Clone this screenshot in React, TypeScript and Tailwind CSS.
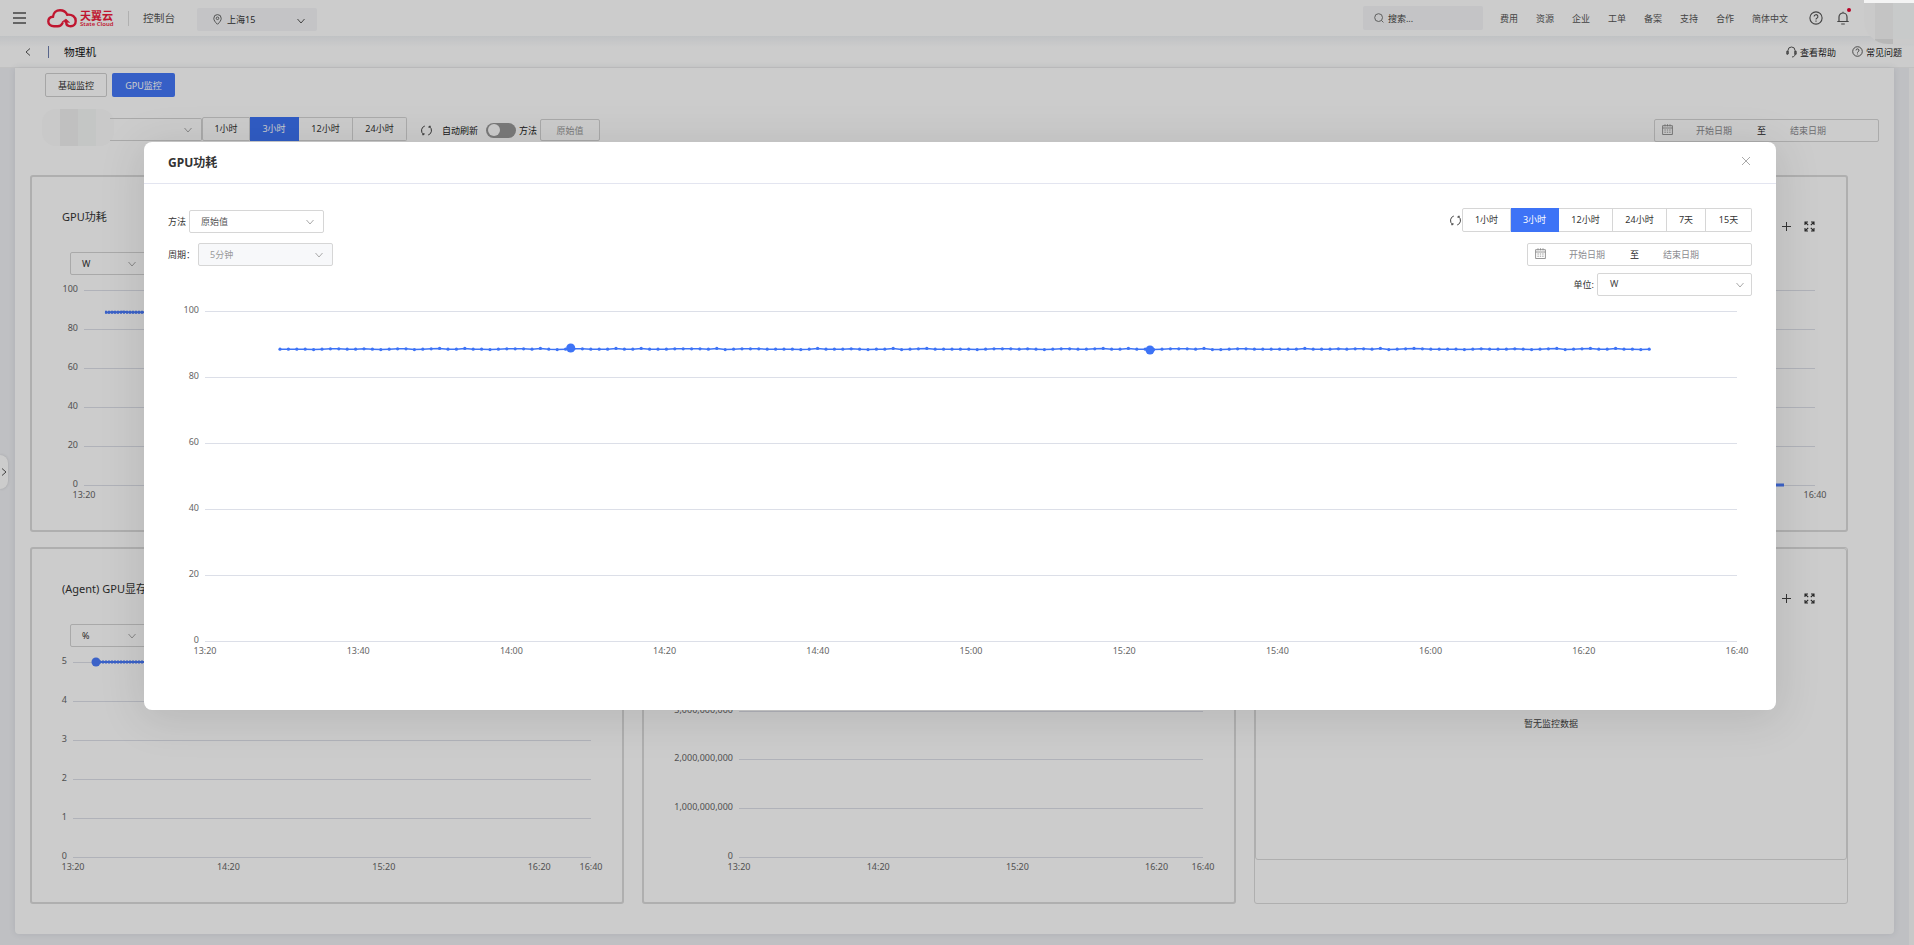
import React from "react";

type IconProps = { className?: string };

const Chevron = ({ className = "" }: IconProps) => (
  <svg viewBox="0 0 10 10" className={`h-[10px] w-[10px] shrink-0 ${className}`} fill="none" stroke="currentColor">
    <path d="M1.500 3 5 7 8.500 3" />
  </svg>
);

const Refresh = () => (
  <svg viewBox="0 0 11 11" className="h-[11px] w-[11px] shrink-0 text-[#444]" fill="none" stroke="currentColor" strokeWidth="1">
    <path d="M3.800 1A4.700 4.700 0 0 0 2.600 9.400M7.200 10A4.700 4.700 0 0 0 8.400 1.600" />
    <path d="M1.200 9.700h1.700V8M9.800 1.300H8.100V3" />
  </svg>
);

const Help = ({ className = "" }: IconProps) => (
  <svg viewBox="0 0 14 14" className={`shrink-0 ${className}`} fill="none" stroke="currentColor" strokeWidth="1.100">
    <circle cx="7" cy="7" r="6.100" />
    <path d="M5.100 5.600a1.900 1.900 0 1 1 2.700 1.700c-.6.3-.8.6-.8 1.200M7 9.600v1.100" />
  </svg>
);

const Calendar = () => (
  <svg viewBox="0 0 11 11" className="mb-[2px] h-[11px] w-[11px] shrink-0 text-[#8a8a8a]" fill="none" stroke="currentColor" strokeWidth=".9">
    <path d="M.6 1.700h9.800v8.800H.6zM.6 4h9.800M3 .3v2M5.500 .3v2M8 .3v2" />
    <path d="M2.400 6h6.400M2.400 8.200h6.400" strokeDasharray="1.400 1" />
  </svg>
);

const Expand = () => (
  <svg viewBox="0 0 11 11" className="h-[11px] w-[11px] text-[#333]" fill="none" stroke="currentColor" strokeWidth="1.100">
    <path d="M1 4V1h3M7 1h3v3M10 7v3H7M4 10H1V7M1 1l3.200 3.200M10 1 6.800 4.200M10 10 6.800 6.800M1 10l3.200-3.200" />
  </svg>
);

const Plus = () => (
  <svg viewBox="0 0 9 9" className="h-[9px] w-[9px] text-[#444]" stroke="currentColor">
    <path d="M4.500 0v9M0 4.500h9" />
  </svg>
);

const Logo = () => (
  <svg viewBox="0 0 30 19" className="h-[19px] w-[30px]" fill="none" stroke="#f01c3c" strokeWidth="2.400" strokeLinecap="round">
    <path d="M15.500 14.200c-1 2-2.600 3-4.600 3H7c-3.500 0-5.700-2-5.700-4.700 0-2.800 2-4.600 4.700-4.800C6.400 3.700 9.300 1.300 13 1.300c3.500 0 6 1.700 7.200 4.400 4.900-.5 8.500 2 8.500 6.200 0 3.300-2.300 5.300-5 5.300-2.600 0-4.500-1.500-4.500-4" />
    <path d="M15.200 12.700l3.800-2.700 3.400 3.200z" fill="#f01c3c" strokeWidth=".6" />
  </svg>
);

type Tick = [number, string];
type ChartProps = {
  viewBox: string;
  className: string;
  left: number;
  right: number;
  yTicks: Tick[];
  xTicks: Tick[];
  xLabelY: number;
  children?: React.ReactNode;
};

const Chart = ({ viewBox, className, left, right, yTicks, xTicks, xLabelY, children }: ChartProps) => (
  <svg viewBox={viewBox} className={`block shrink-0 ${className}`}>
    {yTicks.map(([y, label]) => (
      <g key={label}>
        <path d={`M${left} ${y + 0.5}H${right}`} stroke="#dcdfe8" />
        <text x={left - 6} y={y + 2.2} textAnchor="end" fontSize="9" fill="#666">
          {label}
        </text>
      </g>
    ))}
    {xTicks.map(([x, label]) => (
      <text key={label} x={x} y={xLabelY} textAnchor="middle" fontSize="9" fill="#666">
        {label}
      </text>
    ))}
    {children}
  </svg>
);

const percentTicks: Tick[] = [[115, "100"], [154, "80"], [193, "60"], [232, "40"], [271, "20"], [310, "0"]];

const hourTicks = (left: number): Tick[] => {
  const step = (561 - left) * 0.3;
  return [
    [left, "13:20"],
    [left + step, "14:20"],
    [left + 2 * step, "15:20"],
    [left + 3 * step, "16:20"],
    [561, "16:40"],
  ];
};

const CardChart = ({ left, yTicks, children }: { left: number; yTicks: Tick[]; children?: React.ReactNode }) => (
  <Chart viewBox="2 100 590 250" className="h-[250px] w-[590px]" left={left} right={561} yTicks={yTicks} xTicks={hourTicks(left)} xLabelY={322.5}>
    {children}
  </Chart>
);

const CardHead = ({ title }: { title: string }) => (
  <div className="flex h-[75px] shrink-0 justify-between pl-[30px] pr-[31px]">
    <div className="pt-[32px] text-[11px] leading-4 text-[#333]">{title}</div>
    <div className="flex items-center gap-[13px] pt-[24px]">
      <Plus />
      <Expand />
    </div>
  </div>
);

const Card = ({ title, unit, children }: { title: string; unit: string; children: React.ReactNode }) => (
  <section className="flex h-[357px] w-[594px] flex-col overflow-hidden rounded-[3px] border-2 border-[#dbdbdb]">
    <CardHead title={title} />
    <div className="ml-[38px] flex h-[23px] w-[76px] shrink-0 items-center justify-between rounded-[2px] border border-[#d4d4d4] pl-[11px] pr-2 text-[9px] text-[#333]">
      {unit}
      <Chevron className="text-[#aaa]" />
    </div>
    {children}
  </section>
);

const Segments = ({ items }: { items: [string, string][] }) => (
  <div className="flex h-6">
    {items.map(([label, width], i) => (
      <button
        key={label}
        className={`${width} border-y border-r pb-[2px] text-[9px] leading-none ${i === 0 ? "rounded-l-[2px] border-l" : ""} ${
          label === "3小时" ? "border-[#3d73f6] bg-[#3d73f6] text-white" : "border-[#d6d6d6] text-[#333]"
        } ${i === items.length - 1 ? "rounded-r-[2px]" : ""}`}
      >
        {label}
      </button>
    ))}
  </div>
);

const DateRange = () => (
  <div className="flex h-[23px] w-[225px] items-center rounded-[2px] border border-[#d6d6d6] pl-[7px] pb-px text-[9px] leading-none text-[#8b8b90]">
    <Calendar />
    <span className="ml-[23px] w-9">开始日期</span>
    <span className="ml-[25px] w-[9px] text-[#222]">至</span>
    <span className="ml-6">结束日期</span>
  </div>
);

const wobble = [0, 1, 0, -1, -2, 0, 0, 1, -1, 0, 0, -1, 0, -1, 0, 0, -2, -1, 0, 0, 1, 0, -1, -2, -1, 0, 0];
const points = Array.from({ length: 164 }, (_, i) => ({
  x: 280 + i * 8.4,
  y: 349.2 + wobble[(i * 5 + (i >> 3)) % wobble.length] * 0.4,
}));

const modalY: Tick[] = [[311, "100"], [377, "80"], [443, "60"], [509, "40"], [575, "20"], [641, "0"]];
const modalX: Tick[] = ["13:20", "13:40", "14:00", "14:20", "14:40", "15:00", "15:20", "15:40", "16:00", "16:20", "16:40"].map(
  (label, i) => [205 + i * 153.2, label],
);

const Header = () => (
  <header className="flex h-9 shrink-0 items-center bg-white text-[9px] leading-none text-[#555]">
    <svg viewBox="0 0 13 12" className="ml-[13px] h-3 w-[13px]" stroke="#555" strokeWidth="1.300">
      <path d="M0 1h13M0 6h13M0 11h13" />
    </svg>
    <div className="ml-[21px] flex items-center gap-[3px]">
      <Logo />
      <div className="flex w-[34px] flex-col text-[#f01c3c]">
        <span className="text-[11px] font-bold leading-[11px]">天翼云</span>
        <span className="whitespace-nowrap text-[6px] font-semibold leading-[6px]">State Cloud</span>
      </div>
    </div>
    <div className="ml-[14px] h-[15px] w-px bg-[#ddd]" />
    <span className="ml-[14px] text-[10.7px]">控制台</span>
    <div className="ml-[22px] mt-[3px] flex h-[23px] w-[120px] items-center rounded-[2px] bg-[#f5f6f8] pl-4 pr-[11px] text-[#333]">
      <svg viewBox="0 0 9 11" className="h-[11px] w-[9px]" fill="none" stroke="#666">
        <path d="M4.500 10.300C2 8 .8 6.200.8 4.300a3.700 3.700 0 0 1 7.400 0C8.200 6.200 7 8 4.500 10.300Z" />
        <circle cx="4.500" cy="4.300" r="1.300" />
      </svg>
      <span className="ml-[5px] grow">上海15</span>
      <Chevron className="mt-[2px] text-[#555]" />
    </div>
    <div className="ml-auto flex h-6 w-[120px] items-center gap-[4px] rounded-[2px] bg-[#f5f6f8] pl-[11px] text-[#444]">
      <svg viewBox="0 0 10 10" className="h-[10px] w-[10px]" fill="none" stroke="#777">
        <circle cx="4.600" cy="4.600" r="3.900" />
        <path d="m7.400 7.400 2 2" />
      </svg>
      搜索...
    </div>
    <nav className="ml-[17px] flex gap-[18px] pt-px">
      {["费用", "资源", "企业", "工单", "备案", "支持", "合作", "简体中文"].map((label) => (
        <span key={label}>{label}</span>
      ))}
    </nav>
    <Help className="ml-[21px] h-[14px] w-[14px] text-[#555]" />
    <div className="relative ml-[14px] mr-[23px]">
      <svg viewBox="0 0 12 14" className="h-[14px] w-3" fill="none" stroke="#555" strokeWidth="1.200">
        <path d="M2 10.500V6a4 4 0 0 1 8 0v4.500M.3 10.500h11.400M6 2V.8M4.200 13h3.600" />
      </svg>
      <span className="absolute -top-[3px] left-[10px] h-1 w-1 rounded-full bg-[#e6002d]" />
    </div>
    <div className="w-[42px]" />
  </header>
);

export default function App() {
  return (
    <div className="relative flex h-[945px] w-[1914px] flex-col overflow-hidden bg-[#eff0f4] font-['Noto_Sans','Noto_Sans_CJK_SC',sans-serif]">
      <Header />
      <div className="flex h-8 shrink-0 items-center border-b border-[#f2f2f2] bg-gradient-to-b from-[#f1f3f6] via-white via-35% to-white pt-px text-[9px] leading-none text-[#222]">
        <svg viewBox="0 0 6 8" className="ml-[25px] h-2 w-[6px]" fill="none" stroke="#555">
          <path d="M5 .5 1 4l4 3.500" />
        </svg>
        <div className="ml-[17px] h-3 w-px bg-[#6f7fae]" />
        <span className="ml-[15px] text-[10.7px] text-[#111]">物理机</span>
        <svg viewBox="0 0 11 12" className="mb-px ml-auto h-3 w-[11px]" fill="none" stroke="#444" strokeWidth=".9">
          <path d="M2 8V4.500a3.500 3.500 0 0 1 7 0V8c0 2-1 2.800-3 3M2 5.200H.8v3H2zM9 5.200h1.200v3H9z" />
        </svg>
        <span className="ml-[3px] pt-px">查看帮助</span>
        <Help className="ml-[16px] mb-px h-[11px] w-[11px] text-[#444]" />
        <span className="ml-[3px] mr-[12px] pt-px">常见问题</span>
      </div>

      <div className="flex h-[877px] shrink-0">
        <main className="ml-[15px] h-[866px] w-[1879px] rounded-b bg-white px-[15px] pt-[5px] shadow-[0_0_6px_rgba(60,70,90,0.12)]">
          <div className="ml-[15px] flex gap-[5px] text-[9px] leading-none">
            <button className="h-6 w-[62px] rounded-[2px] border border-[#d0d0d0] text-[#333]">基础监控</button>
            <button className="h-6 w-[63px] rounded-[2px] bg-[#4477f8] text-white">GPU监控</button>
          </div>
          <div className="mt-5 flex h-6 items-start text-[9px] leading-none text-[#222]">
            <div className="mt-px flex h-[23px] w-[172px] items-center pl-3">
              <div className="-mt-1 flex h-[37px] w-[72px] shrink-0 rounded-[14px] bg-[#fcfcfc]">
                <div className="ml-[18px] w-[18px] bg-[#f0f0f0]" />
                <div className="w-[18px] bg-[#f6f8f7]" />
              </div>
              <div className="-ml-1 flex h-[23px] grow items-center justify-end rounded-r-[2px] border-y border-r border-[#d4d4d4] pr-2">
                <Chevron className="text-[#aaa]" />
              </div>
            </div>
            <Segments items={[["1小时", "w-12"], ["3小时", "w-[49px]"], ["12小时", "w-[54px]"], ["24小时", "w-[54px]"]]} />
            <div className="ml-[14px] flex h-6 items-center pt-[2px]">
              <Refresh />
              <span className="ml-[10px]">自动刷新</span>
              <span className="ml-2 flex h-[15px] w-[30px] items-center rounded-full bg-[#999] pl-[2px]">
                <span className="h-[12px] w-[12px] rounded-full bg-white" />
              </span>
              <span className="ml-[3px]">方法</span>
              <span className="ml-[3px] flex h-[22px] w-[60px] items-center justify-center rounded-[2px] border border-[#d4d4d4] text-[#999]">
                原始值
              </span>
            </div>
            <div className="ml-auto mt-[2px]">
              <DateRange />
            </div>
          </div>

          <div className="mt-[34px] grid w-[1818px] grid-cols-3 gap-x-[18px] gap-y-[15px]">
            <Card title="GPU功耗" unit="W">
              <CardChart left={54} yTicks={percentTicks}>
                <path d="M75 137l3 .5 4-.5 6 .3 5-.5 6 .4H530" fill="none" stroke="#4a7bfa" strokeWidth="2" />
                <path d="M75 137.200H530" stroke="#4a7bfa" strokeWidth="3" strokeDasharray="2 1" />
              </CardChart>
            </Card>
            <Card title="GPU温度" unit="℃">
              <CardChart left={54} yTicks={percentTicks} />
            </Card>
            <Card title="GPU使用率" unit="%">
              <CardChart left={54} yTicks={percentTicks}>
                <path d="M75 310H530" stroke="#4a7bfa" strokeWidth="3" />
              </CardChart>
            </Card>
            <Card title="(Agent) GPU显存使用率" unit="%">
              <CardChart left={43} yTicks={[[115, "5"], [154, "4"], [193, "3"], [232, "2"], [271, "1"], [310, "0"]]}>
                <path d="M66 115H530" stroke="#4a7bfa" strokeWidth="2" />
                <path d="M66 115H530" stroke="#4a7bfa" strokeWidth="3" strokeDasharray="2 1" />
                <circle cx="66" cy="115" r="4.500" fill="#4a7bfa" />
              </CardChart>
            </Card>
            <Card title="(Agent) GPU显存使用量" unit="Byte">
              <CardChart
                left={97}
                yTicks={[[115, "4,000,000,000"], [164, "3,000,000,000"], [212, "2,000,000,000"], [261, "1,000,000,000"], [310, "0"]]}
              />
            </Card>
            <section className="h-[357px] w-[594px] rounded-[3px] border border-[#dbdbdb]">
              <div className="flex h-[312px] flex-col rounded-[3px] border border-[#dbdbdb]">
                <CardHead title="(Agent) GPU编码使用率" />
                <p className="mt-[94px] text-center text-[9px] leading-3 text-[#444]">暂无监控数据</p>
              </div>
            </section>
          </div>
        </main>
        <div className="ml-auto w-[5px] bg-[#fafafa]" />
      </div>

      <div className="absolute left-0 top-[455px] flex h-[34px] w-2 items-center rounded-r-lg bg-white shadow-[0_0_3px_rgba(0,0,0,0.15)]">
        <svg viewBox="0 0 6 8" className="ml-px h-2 w-[6px]" fill="none" stroke="#555">
          <path d="M1 .5 5 4 1 7.500" />
        </svg>
      </div>

      <div className="absolute inset-0 flex items-start bg-black/20 pl-[144px] pt-[142px]">
        <div className="flex h-[568px] w-[1632px] flex-col rounded-lg bg-white shadow-[0_6px_44px_4px_rgba(0,0,0,0.10)]">
          <div className="flex h-[42px] shrink-0 items-center justify-between border-b border-[#e3e5f0] pl-6 pr-[26px]">
            <h2 className="text-[12px] font-bold leading-none text-[#333]">GPU功耗</h2>
            <svg viewBox="0 0 8 8" className="mb-[3px] h-2 w-2" stroke="#aaa">
              <path d="m0 0 8 8M8 0 0 8" />
            </svg>
          </div>
          <div className="flex h-[121px] shrink-0 justify-between px-6 text-[9px] leading-none text-[#333]">
            <div className="flex flex-col gap-[10px] pt-[26px]">
              <div className="flex h-[23px] items-center gap-[3px]">
                方法
                <div className="flex h-[23px] w-[135px] items-center justify-between rounded-[2px] border border-[#d6d6d6] pl-[11px] pr-2 text-[#555]">
                  原始值
                  <Chevron className="text-[#aaa]" />
                </div>
              </div>
              <div className="flex h-[23px] items-center">
                <span className="w-[30px] whitespace-nowrap">周期：</span>
                <div className="flex h-[23px] w-[135px] items-center justify-between rounded-[2px] border border-[#d6d6d6] bg-[#f7f8fa] pl-[11px] pr-2 text-[#999]">
                  5分钟
                  <Chevron className="text-[#aaa]" />
                </div>
              </div>
            </div>
            <div className="flex flex-col items-end pt-6">
              <div className="flex items-center gap-px">
                <Refresh />
                <Segments
                  items={[
                    ["1小时", "w-[49px]"],
                    ["3小时", "w-12"],
                    ["12小时", "w-[54px]"],
                    ["24小时", "w-[54px]"],
                    ["7天", "w-[39px]"],
                    ["15天", "w-[46px]"],
                  ]}
                />
              </div>
              <div className="mt-[11px]">
                <DateRange />
              </div>
              <div className="mt-[7px] flex h-[23px] items-center gap-[3px] pb-px">
                单位:
                <div className="mt-px flex h-[23px] w-[155px] items-center justify-between rounded-[2px] border border-[#d6d6d6] pl-[12px] pr-[6px] text-[#444]">
                  <span className="pb-[2px]">W</span>
                  <Chevron className="text-[#aaa]" />
                </div>
              </div>
            </div>
          </div>
          <Chart viewBox="144 305 1632 400" className="h-[400px] w-[1632px]" left={205} right={1737} yTicks={modalY} xTicks={modalX} xLabelY={653.5}>
            <polyline points={points.map((p) => `${p.x},${p.y}`).join(" ")} fill="none" stroke="#3d73f6" strokeWidth="1.500" />
            {points.map((p) => (
              <circle key={p.x} cx={p.x} cy={p.y} r="1.600" fill="#3d73f6" />
            ))}
            <circle cx="570.700" cy="348" r="4.500" fill="#3d73f6" />
            <circle cx="1150" cy="350" r="4.500" fill="#3d73f6" />
          </Chart>
        </div>
      </div>

      <div className="absolute right-0 top-0 h-[44px] w-[50px] overflow-hidden rounded-bl-[24px] bg-[#cacaca]">
        <div className="h-[3px] bg-[#f4f4f4]" />
        <div className="flex h-[36px] pl-[11px]">
          <div className="w-[18px] bg-[#c4c4c4]" />
          <div className="grow bg-[#c8caca]" />
        </div>
        <div className="ml-[11px] h-[5px] w-[18px] bg-[#b7b7b7]" />
      </div>
    </div>
  );
}
